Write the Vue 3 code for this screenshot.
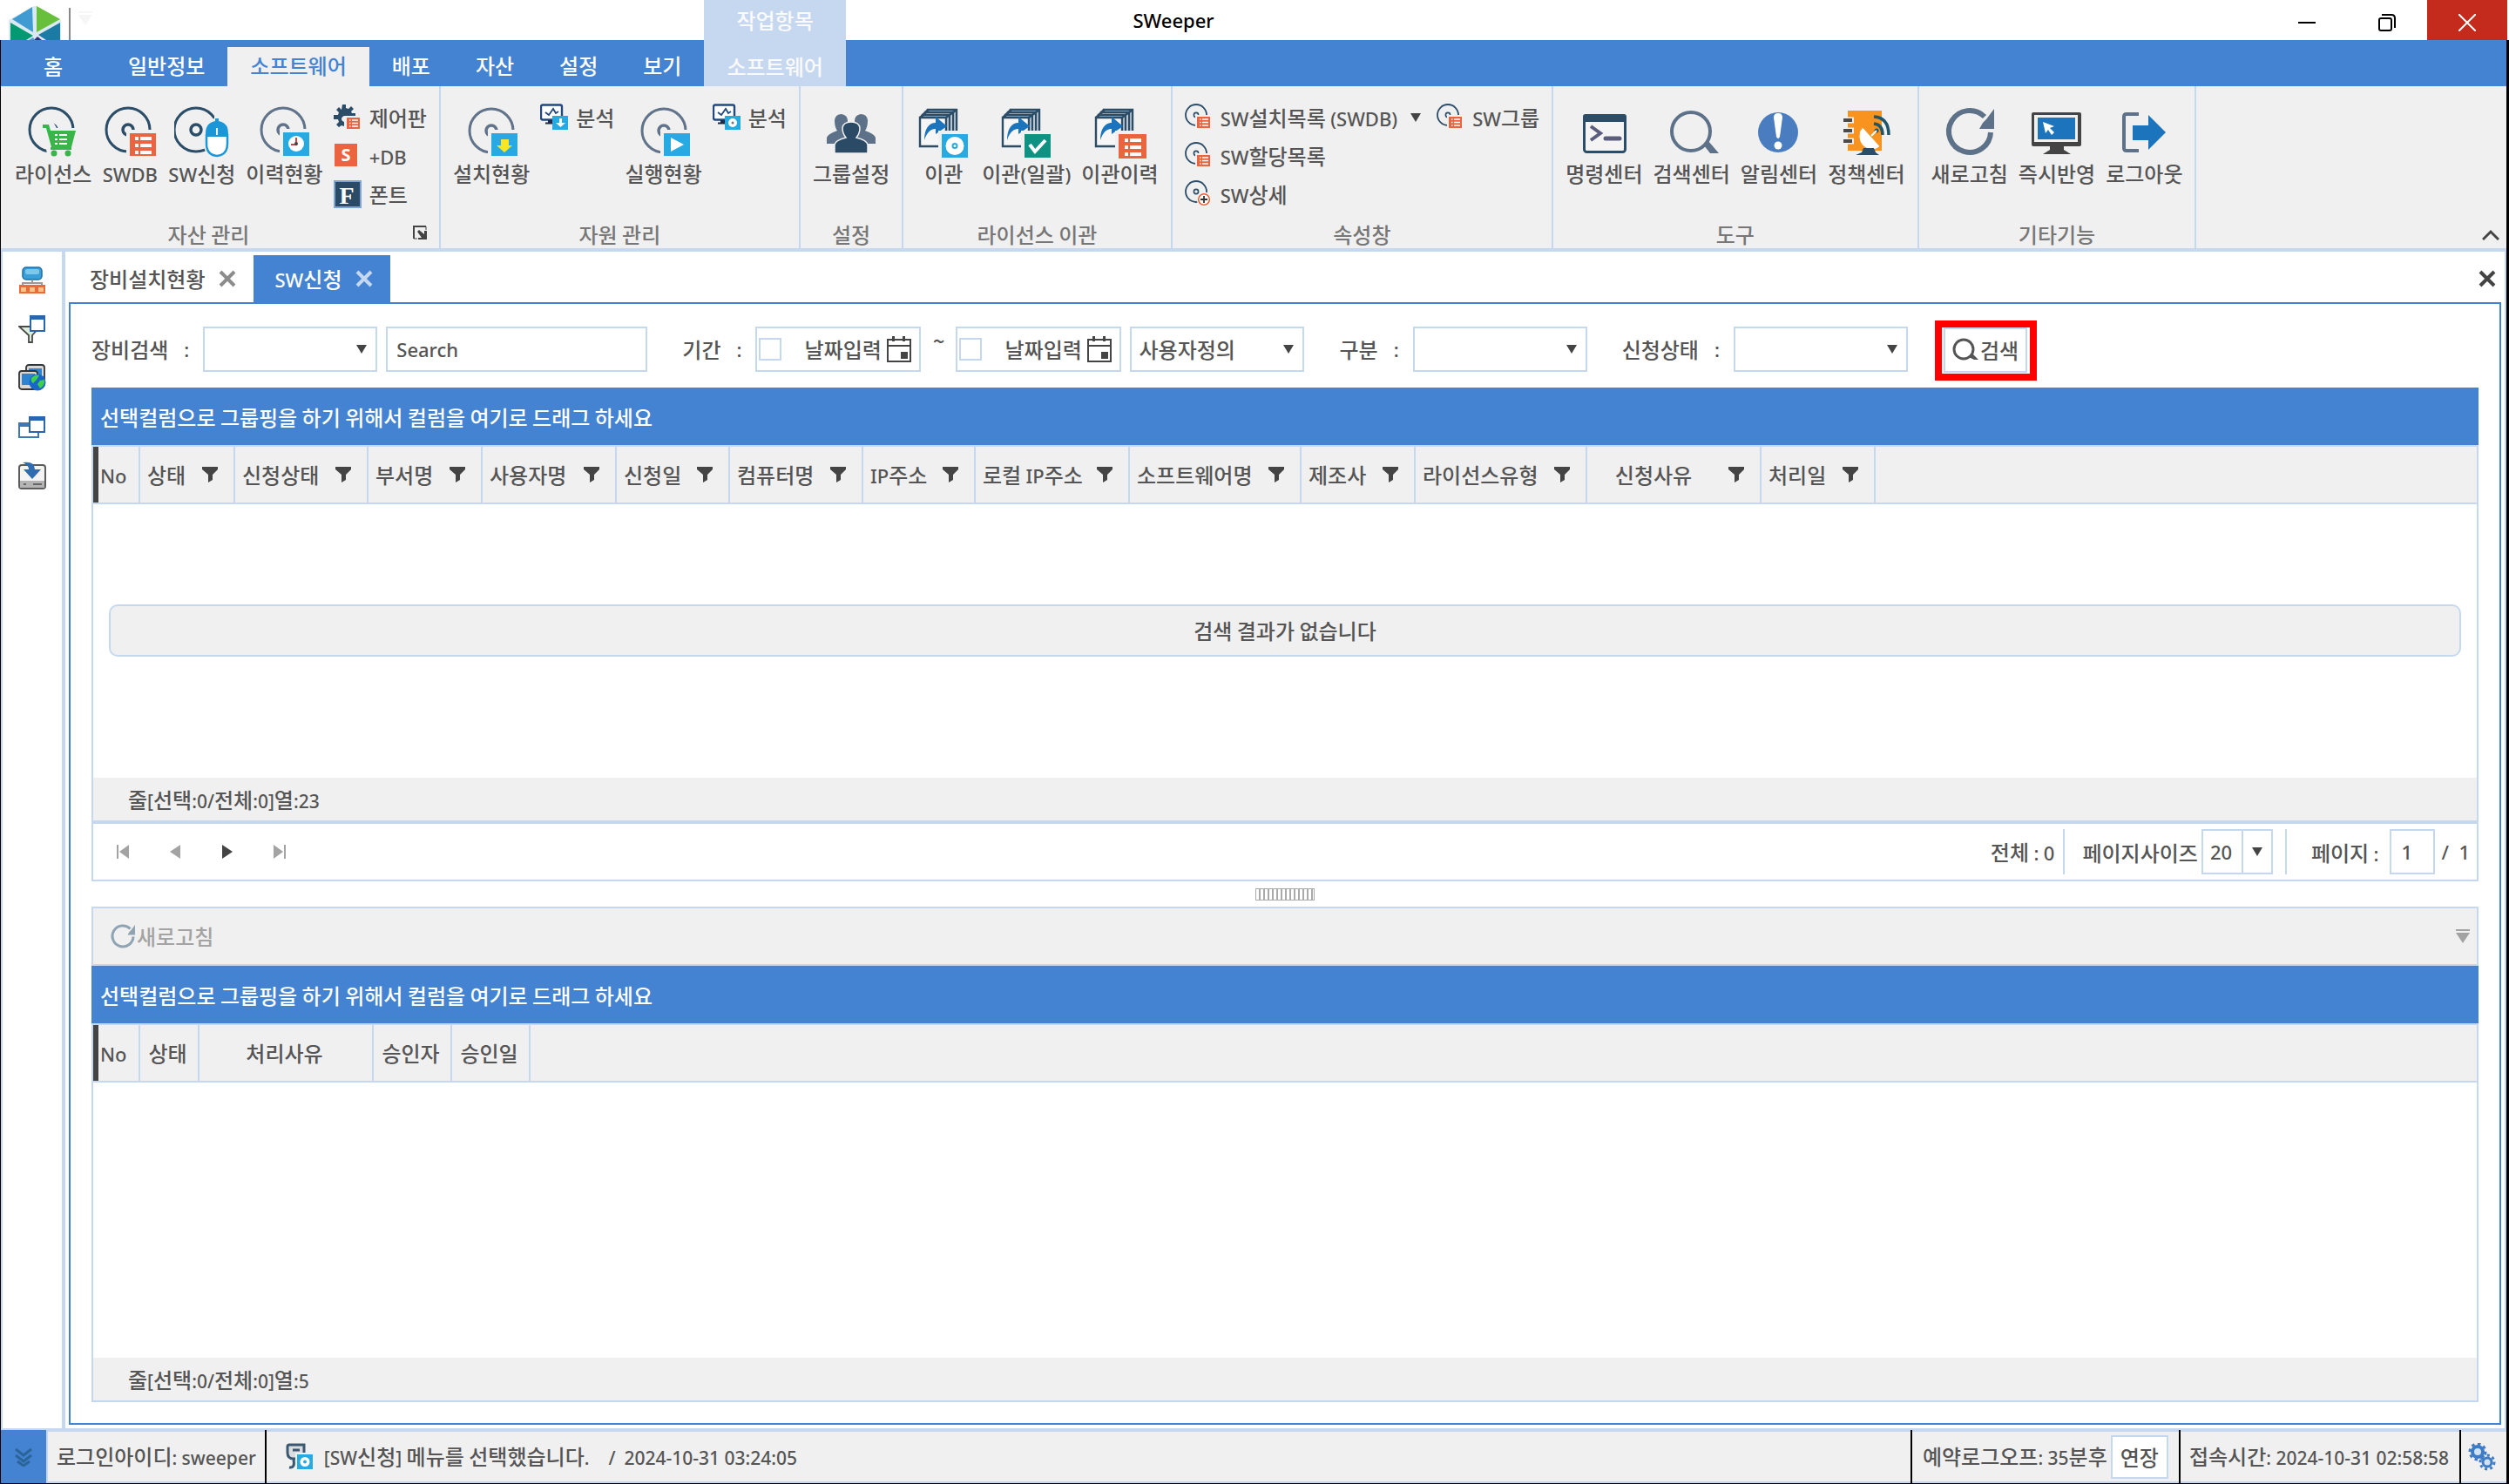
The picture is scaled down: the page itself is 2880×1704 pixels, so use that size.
<script setup>
import { h, ref } from 'vue'

const latinRun = /([A-Za-z0-9:()[\]/.+~-]+(?: [0-9][0-9:]+)*)/
const Mixed = (props) =>
  h('span', { class: 'mixed' }, props.text.split(latinRun).filter(Boolean).map((part) =>
    latinRun.test(part) ? h('span', { class: 'latin' }, part) : part))
Mixed.props = ['text']

const Icon = (props) =>
  h('svg', {
    viewBox: props.box || '0 0 64 64',
    width: props.w || 64,
    height: props.h || props.w || 64,
    'aria-hidden': 'true',
    class: 'icon',
    innerHTML: art[props.name]
  })
Icon.props = ['name', 'box', 'w', 'h']

const disc = (cx, cy, r, c = '#2c4d68', w = 3) =>
  `<circle cx="${cx}" cy="${cy}" r="${r}" fill="none" stroke="${c}" stroke-width="${w}"/><circle cx="${cx}" cy="${cy}" r="6" fill="none" stroke="${c}" stroke-width="${w + 0.5}"/>`
const badge = (x, y, w, hgt, c) =>
  `<path fill="#f0f0f0" d="M${x - 4} ${y - 4}h${w + 8}v${hgt + 8}h-${w + 8}z"/><path fill="${c}" d="M${x} ${y}h${w}v${hgt}h-${w}z"/>`
const lines = (x, y) =>
  [0, 8, 16].map((d) => `<path fill="#fff" d="M${x} ${y + d}h4v4h-4zM${x + 6} ${y + d}h13v4h-13z"/>`).join('')
const stack = `<g fill="none" stroke="#2c4d68" stroke-width="2.4"><path fill="#c9d2da" d="M14 7h33v34H14z"/><path fill="#dfe5ea" d="M11 10h32v34H11z"/><path fill="#c9d2da" d="M8 13h31v34H8z"/><path fill="#f6f6f6" d="M5 16h30v33H5z"/><path d="M5 16l9-9M35 16l12-9"/></g><path fill="#1c75bc" d="M10 42c0-13 5-20 13-20v-7l13 11-13 9v-6c-6 0-10 4-13 13z"/>`
const smallDisc = '<circle cx="13" cy="13" r="12" fill="none" stroke="#2c4d68" stroke-width="1.8"/><circle cx="13" cy="13" r="2.6" fill="none" stroke="#2c4d68" stroke-width="1.6"/>'
const smallList = '<path fill="#f0f0f0" d="M12 13h20v19H12z"/><path fill="#e9643f" d="M14 15h15v13H14z"/><path stroke="#fff" stroke-width="1.4" d="M17 18h1.500M20 18h7M17 21.500h1.500M20 21.500h7M17 25h1.500M20 25h7"/>'
const monitor = '<path fill="#fff" stroke="#24487c" stroke-width="2.400" d="M3 1.500h20q2 0 2 2v13q0 2-2 2H3q-2 0-2-2v-13q0-2 2-2z"/><path fill="none" stroke="#24487c" stroke-width="1.800" d="M6 10l4 3 5-7 3 5 3-2"/><path fill="#1c2c44" d="M9 19h7v3H9zM6 21.500h9v2H6z"/><path fill="#27aae1" d="M14 14h18v16H14z"/>'
const refresh = (c) => `<path fill="none" stroke="${c}" stroke-width="6" d="M56 33A24 24 0 1 1 49 15"/><path fill="${c}" d="M60 6v23H43l4-7 4-4z"/>`

const art = {
  license: disc(30, 30, 25) + '<path fill="#f0f0f0" d="M17 21h15l4 7h26v10l-4 26H26L20 28z"/><path fill="#3ab54a" d="M20 24h7l2 7h29l-5 19H30l-6-22h-4zM29 50h24v3H29z"/><circle cx="33" cy="57" r="3.500" fill="#3ab54a"/><circle cx="49" cy="57" r="3.500" fill="#3ab54a"/><path stroke="#fff" stroke-width="2" d="M34 36h3M39 36h9M34 41h3M39 41h9M34 46h3M39 46h9"/>',
  swdb: disc(30, 30, 25) + badge(32, 34, 30, 26, '#e9643f') + lines(38, 38),
  request: disc(25, 30, 25) + '<path fill="#f0f0f0" d="M46 12h7v5q12 5 12 18v12q-2 15-16 15-13-1-16-15V33q1-12 13-16z"/><path fill="#fff" stroke="#1b97d8" stroke-width="2.500" d="M37 36v10q0 13 12 14 12-1 12-14V36z"/><path fill="#1b97d8" d="M36 38v-4q0-12 11-14v-3h4v3q11 2 11 14v4z"/><path stroke="#f0f0f0" stroke-width="2" d="M49 28v8"/>',
  history: disc(31, 30, 25, '#61738a') + badge(31, 33, 30, 27, '#27aae1') + '<circle cx="46" cy="46" r="9" fill="#fff"/><path fill="none" stroke="#c44" stroke-width="2" d="M46 39v8h-6"/><circle cx="46" cy="46" r="2" fill="#444"/>',
  install: disc(32, 31, 25, '#61738a') + badge(32, 34, 30, 26, '#27aae1') + '<path fill="#fbe623" d="M43 41h9v7h4l-9 8-9-8h5z"/>',
  run: disc(32, 31, 25, '#61738a') + badge(32, 34, 30, 26, '#27aae1') + '<path fill="#fff" d="M40 39v16l15-8z"/>',
  group: '<path fill="#5d7188" d="M4 46v-7q1-4 12-8-3-4-3-12 1-7 8-7 7 1 7 8 0 7-3 11l8 3v12zM60 46v-7q-1-4-12-8 3-4 3-12-1-7-8-7-7 1-7 8 0 7 3 11l-8 3v12z"/><path fill="#2a4a66" stroke="#f0f0f0" stroke-width="1.500" d="M13 57V47q1-5 13-8-4-5-4-11 1-7 10-7t10 7q0 6-4 11 12 3 13 8v10z"/>',
  moveDisc: stack + badge(30, 35, 30, 27, '#27aae1') + '<circle cx="45" cy="48.500" r="10.500" fill="#fff"/><circle cx="45" cy="48.500" r="2.500" fill="none" stroke="#27aae1" stroke-width="2"/>',
  moveCheck: stack + badge(30, 35, 30, 27, '#109282') + '<path fill="none" stroke="#fff" stroke-width="4" d="M36 47l6 8 12-13"/>',
  moveList: stack + badge(31, 35, 32, 28, '#e9643f') + lines(38, 40),
  command: '<rect x="9.500" y="13.500" width="47" height="42" rx="3" fill="#f4f4f4" stroke="#2c4d68" stroke-width="3"/><path fill="#2c4d68" d="M8 15q0-3 3-3h44q3 0 3 3v6H8z"/><path fill="none" stroke="#5b5d7c" stroke-width="4" d="M17 26l11 8-11 8"/><path stroke="#5b5d7c" stroke-width="5" stroke-linecap="round" d="M34 40h16"/>',
  search: '<circle cx="31" cy="32" r="22" fill="none" stroke="#5d7188" stroke-width="4"/><path fill="#5d7188" d="M46 48l5-5 12 14h-10z"/>',
  alert: '<circle cx="31" cy="33" r="23" fill="#4a7dbf"/><path fill="#fff" d="M26 16q0-5 5-5t5 5l-3 22q-2 4-4 0z"/><circle cx="31" cy="48" r="4.500" fill="#fff"/>',
  policy: '<path fill="#f7931e" d="M11 8h39v46H11z"/><path stroke="#f0f0f0" stroke-width="7" d="M5 19h13M5 31h13M5 43h13"/><path stroke="#4a4a4a" stroke-width="4" d="M6 19h10M6 31h10M6 43h10"/><path fill="none" stroke="#20566b" stroke-width="3.500" d="M41 15q17 1 17 21M41 23q10 1 10 13"/><path fill="#fff" stroke="#f7931e" d="M28 27l20 22q-6 6-14 3-9-4-10-13-1-7 4-12z"/><circle cx="44" cy="31" r="2.500" fill="#20566b"/><path stroke="#fff" stroke-width="2" d="M38 37l6-6"/><path fill="#2c4d68" d="M29 51h12l2 5 4 3H20l7-3z"/>',
  refresh: refresh('#5d7188'),
  refreshPale: refresh('#8fa3b3'),
  apply: '<path fill="#444" d="M3 12q0-2 2-2h53q2 0 2 2v35q0 2-2 2H40v4l8 5H16l8-5v-4H5q-2 0-2-2z"/><path fill="#f0f0f0" d="M6 13h50v31H6z"/><path fill="#1c75bc" d="M10 16h43v25H10z"/><path fill="#fff" d="M16 21l13 5-5 2 5 5-3 3-4-6-3 4z"/>',
  logout: '<path fill="none" stroke="#5d7188" stroke-width="4" d="M26 12H12q-3 0-3 3v36q0 3 3 3h14"/><path fill="#1c75bc" d="M19 25h18V13l20 20-20 20V42H19z"/>',
  panel: '<path fill="#2c4d68" d="M10 1h4v4l3 1 3-3 3 3-3 3 1 2h4v5H15q0-2-3-2-3 1-3 4 0 2 3 3v5l-3-1-3 2-3-3 3-3-1-3H0v-5h5l1-3-3-3 3-3 3 3z"/><path fill="#f0f0f0" d="M13 14h18v17H13z"/><path fill="#e9643f" d="M15 16h15v13H15z"/><path stroke="#fff" stroke-width="1.500" d="M18 19h1.500M21 19h7M18 22.500h1.500M21 22.500h7M18 26h1.500M21 26h7"/>',
  sdb: '<path fill="#e9643f" d="M1 2h26v26H1z"/><text x="14" y="22" text-anchor="middle" font-family="Open Sans, sans-serif" font-size="20" font-weight="700" fill="#fff">S</text>',
  font: '<path fill="#7fa4d8" d="M0 0h32v32H0z"/><path fill="#2a4a66" d="M2 2h28v28H2z"/><text x="15" y="27" text-anchor="middle" font-family="Liberation Serif, serif" font-size="28" font-weight="700" fill="#fff">F</text>',
  discList: smallDisc + smallList,
  discPlus: smallDisc + '<circle cx="22" cy="22" r="8.500" fill="#f0f0f0"/><circle cx="22" cy="22" r="6.300" fill="#fff" stroke="#f15a29" stroke-width="1.500"/><path stroke="#333" stroke-width="1.800" d="M18 22h8M22 18v8"/>',
  analyseDown: monitor + '<path fill="#fff" d="M22 17h3v5h4l-5.500 5-5.500-5h4z"/>',
  analyseDisc: monitor + '<circle cx="23" cy="22" r="5" fill="#fff"/><circle cx="23" cy="22" r="1.500" fill="#777"/>',
  logo: '<path fill="#dbe9f3" d="M31 1h3l28 16v23H2V17z"/><path fill="#3f9bd1" d="M29 2l1 29L6 16z"/><path fill="#67bf3c" d="M34 1v30l27-15z"/><path fill="#039a72" d="M4 20l26 15-8 5H4z"/><path fill="#1b7ba5" d="M61 20L36 34l9 6h16z"/><path fill="#2b2f7c" d="M35 36l5 4h-9z"/><path fill="#4e9bd8" d="M30 37l2 3h-7z"/>',
  tree: '<rect x="5" y="1" width="22" height="14" rx="4" fill="#3a9fd6" stroke="#1d6fa8" stroke-width="1.500"/><rect x="8" y="3" width="16" height="6" rx="2" fill="#7cc7ea"/><path fill="none" stroke="#9a9a9a" stroke-width="2" d="M16 15v5M5 22v-3h22v3"/><path fill="#ea6a3a" d="M1 21h30v10H1z"/><path fill="#ffc08a" d="M3 24h6v5H3zM13 24h6v5h-6zM23 24h6v5h-6z"/>',
  filterWin: '<path fill="#dcefdc" stroke="#4a4a4a" stroke-width="1.800" d="M1 13h24l-9 10v8h-4v-8z"/><path fill="#fff" stroke="#2a66b0" stroke-width="2" d="M14 1h16v17H14z"/><path fill="#2a66b0" d="M13 0h18v5H13z"/>',
  globeWin: '<rect x="9" y="1" width="21" height="22" rx="3" fill="#d8d8d8" stroke="#333" stroke-width="1.800"/><path fill="#2d84d0" d="M12 5h15v14H12z"/><rect x="1" y="8" width="21" height="21" rx="3" fill="#d8d8d8" stroke="#333" stroke-width="1.800"/><path fill="#2d84d0" d="M4 11h15v13H4z"/><circle cx="22" cy="21" r="9.500" fill="#1866c8"/><path fill="#3fd04a" d="M15 16q5-5 9-3l-3 5-4 4q-3-2-2-6zM25 19l5-1q1 6-5 10l-3-5z"/>',
  windows: '<path fill="#fff" stroke="#3c78b8" stroke-width="2" d="M1 12h22v16H1z"/><path fill="#3c78b8" d="M1 11h14v5H1z"/><path fill="#fff" stroke="#2a66b0" stroke-width="2" d="M13 5h17v17H13z"/><path fill="#2a66b0" d="M12 4h19v5H12z"/>',
  download: '<rect x="1" y="4" width="30" height="27" rx="3" fill="#f4f4f4" stroke="#5c5c5c" stroke-width="2"/><path fill="#b4b4b4" d="M2 22h28v8H2z"/><path stroke="#666" stroke-width="2" d="M6 26h3M17 26h10"/><path fill="#2f6cb0" d="M5 1q14-2 14 8h7L16 20 6 9h6q0-5-7-8z"/>',
  message: '<path fill="#d9dde0" stroke="#3a5970" stroke-width="3" d="M4 2h17v16H9q-7 0-7-7V4q0-2 2-2z"/><path fill="none" stroke="#3a5970" stroke-width="3" d="M8 8h8M4 28q7 1 5-9"/><path fill="#f0f0f0" d="M11 11h21v20H11z"/><path fill="#27aae1" d="M13 13h18v17H13z"/><circle cx="22" cy="21.500" r="5.500" fill="#fff"/><circle cx="22" cy="21.500" r="2" fill="#27aae1"/>',
  gears: '<g fill="none" stroke="#3f7cc4"><circle cx="11" cy="10" r="6" stroke-width="4" fill="#cfe2f6"/><circle cx="11" cy="10" r="9" stroke-width="3" stroke-dasharray="3.500 3.500"/><circle cx="22" cy="22" r="5" stroke-width="3" fill="#cfe2f6"/><circle cx="22" cy="22" r="8" stroke-width="3" stroke-dasharray="3 3.200"/></g>',
  chevrons: '<path fill="none" stroke="#2a6599" stroke-width="3" d="M2 2l9 7 9-7M2 9l9 7 9-7M4 16l7 5 7-5"/>',
  funnel: '<path fill="#444" d="M0 0h18v3l-6 6v6l-5 3V9L0 3z"/>',
  caret: '<path fill="#444" d="M0 0h12L6 10z"/>',
  cross: '<path stroke="currentColor" stroke-width="4" d="M2 2l16 16M18 2L2 18"/>',
  calendar: '<path fill="none" stroke="#444" stroke-width="2" d="M1 4h26v25H1zM1 11h26"/><path fill="#444" d="M6 0h3v6H6zM18 0h3v6h-3zM16 18h8v8h-8z"/>',
  lens: '<circle cx="13" cy="13" r="11" fill="none" stroke="#555" stroke-width="3"/><path fill="#555" d="M19 22l4-4 7 7h-5z"/>',
  first: '<path fill="#a3a3a3" d="M0 0h2v16H0zM14 0v16L3 8z"/>',
  prev: '<path fill="#a3a3a3" d="M13 0v16L1 8z"/>',
  next: '<path fill="#444" d="M1 0v16l12-8z"/>',
  last: '<path fill="#a3a3a3" d="M14 0h-2v16h2zM0 0v16l11-8z"/>',
  overflow: '<path fill="currentColor" d="M0 0h16v2H0zM0 4h16l-8 12z"/>',
  launcher: '<path fill="none" stroke="#444" stroke-width="2" d="M1 15V1h14"/><path fill="none" stroke="#444" d="M1 15h4M15 1v4"/><path fill="#444" d="M5 7l2-2 6 5V6h3v10H6v-2h4z"/>',
  up: '<path fill="none" stroke="#444" stroke-width="3" d="M1 12l9-9 9 9"/>',
  minimise: '<path stroke="#000" stroke-width="2" d="M0 10h20"/>',
  restore: '<rect x="1" y="5" width="14" height="14" rx="2" fill="none" stroke="#000" stroke-width="2"/><path fill="none" stroke="#000" stroke-width="2" d="M4 1h11q4 0 4 4v11"/>',
  close: '<path stroke="#fff" stroke-width="2" d="M0 0l20 20M20 0L0 20"/>'
}

const tabs = ['일반정보', '소프트웨어', '배포', '자산', '설정', '보기']
const activeTab = ref('소프트웨어')

const groups = [
  { label: '자산 관리', launcher: true, items: [
    { big: '라이선스', icon: 'license' }, { big: 'SWDB', icon: 'swdb' },
    { big: 'SW신청', icon: 'request' }, { big: '이력현황', icon: 'history' },
    { small: [['제어판', 'panel'], ['+DB', 'sdb'], ['폰트', 'font']] }] },
  { label: '자원 관리', items: [
    { big: '설치현황', icon: 'install' }, { small: [['분석', 'analyseDown']] },
    { big: '실행현황', icon: 'run' }, { small: [['분석', 'analyseDisc']] }] },
  { label: '설정', items: [{ big: '그룹설정', icon: 'group' }] },
  { label: '라이선스 이관', items: [
    { big: '이관', icon: 'moveDisc' }, { big: '이관(일괄)', icon: 'moveCheck' }, { big: '이관이력', icon: 'moveList' }] },
  { label: '속성창', items: [
    { small: [['SW설치목록 (SWDB)', 'discList', true], ['SW할당목록', 'discList'], ['SW상세', 'discPlus']] },
    { small: [['SW그룹', 'discList']] }] },
  { label: '도구', items: [
    { big: '명령센터', icon: 'command' }, { big: '검색센터', icon: 'search' },
    { big: '알림센터', icon: 'alert' }, { big: '정책센터', icon: 'policy' }] },
  { label: '기타기능', items: [
    { big: '새로고침', icon: 'refresh' }, { big: '즉시반영', icon: 'apply' }, { big: '로그아웃', icon: 'logout' }] }
]

const side = [['tree', '조직'], ['filterWin', '필터'], ['globeWin', '원격'], ['windows', '창'], ['download', '저장']]

const requestColumns = [
  ['No', 54], ['상태', 109, true], ['신청상태', 153, true], ['부서명', 131, true], ['사용자명', 154, true],
  ['신청일', 130, true], ['컴퓨터명', 153, true], ['IP주소', 129, true], ['로컬 IP주소', 177, true],
  ['소프트웨어명', 197, true], ['제조사', 131, true], ['라이선스유형', 197, true], ['신청사유', 200, true], ['처리일', 131, true]
]
const approvalColumns = [['No', 54], ['상태', 68], ['처리사유', 200], ['승인자', 90], ['승인일', 90]]
const hint = '선택컬럼으로 그룹핑을 하기 위해서 컬럼을 여기로 드래그 하세요'
</script>

<template>
  <div class="window">
    <header class="titlebar">
      <Icon class="logo" name="logo" box="0 0 64 40" :w="64" :h="40" />
      <span class="rule"></span>
      <button class="quick" aria-label="빠른 실행"><Icon name="overflow" box="0 0 16 16" :w="16" /></button>
      <h1><Mixed text="SWeeper" /></h1>
      <button class="win" aria-label="최소화"><Icon name="minimise" box="0 0 20 20" :w="20" /></button>
      <button class="win" aria-label="복원"><Icon name="restore" box="0 0 20 20" :w="20" /></button>
      <button class="win shut" aria-label="닫기"><Icon name="close" box="0 0 20 20" :w="20" /></button>
    </header>

    <div class="frame">
      <nav class="strip">
        <button class="tab home">홈</button>
        <button v-for="t in tabs" :key="t" class="tab" :class="{ on: t === activeTab }" @click="activeTab = t">{{ t }}</button>
        <div class="context">
          <span class="context-title">작업항목</span>
          <button class="tab">소프트웨어</button>
        </div>
      </nav>

      <section class="ribbon">
        <div v-for="g in groups" :key="g.label" class="group">
          <div class="group-body">
            <template v-for="(it, i) in g.items" :key="i">
              <button v-if="it.big" class="big"><Icon :name="it.icon" /><Mixed :text="it.big" /></button>
              <div v-else class="smalls">
                <button v-for="s in it.small" :key="s[0]" class="small">
                  <Icon :name="s[1]" box="0 0 32 32" :w="32" /><Mixed :text="s[0]" />
                  <Icon v-if="s[2]" class="more" name="caret" box="0 0 12 10" :w="12" :h="10" />
                </button>
              </div>
            </template>
          </div>
          <div class="group-label" :class="{ offset: g.launcher }">
            <span>{{ g.label }}</span>
            <button v-if="g.launcher" class="launcher" aria-label="자세히"><Icon name="launcher" box="0 0 16 16" :w="16" /></button>
          </div>
        </div>
        <button class="collapse" aria-label="리본 접기"><Icon name="up" box="0 0 20 14" :w="20" :h="14" /></button>
      </section>

      <div class="work">
        <aside class="side">
          <button v-for="s in side" :key="s[0]" :aria-label="s[1]"><Icon :name="s[0]" box="0 0 32 32" :w="32" /></button>
        </aside>
        <main class="main">
          <div class="docs">
            <div class="doc"><span>장비설치현황</span><button aria-label="탭 닫기"><Icon name="cross" box="0 0 20 20" :w="20" /></button></div>
            <div class="doc on"><Mixed text="SW신청" /><button aria-label="탭 닫기"><Icon name="cross" box="0 0 20 20" :w="20" /></button></div>
            <button class="close-all" aria-label="모두 닫기"><Icon name="cross" box="0 0 20 20" :w="20" /></button>
          </div>

          <div class="page">
            <form class="filters" @submit.prevent>
              <label class="cap first" for="device"><span>장비검색</span><span>:</span></label>
              <span class="pick"><select id="device"><option></option></select><Icon name="caret" box="0 0 12 10" :w="12" :h="10" /></span>
              <input class="box keyword" type="text" placeholder="Search" aria-label="검색어">
              <label class="cap" for="from"><span>기간</span><span>:</span></label>
              <span class="box date"><input type="checkbox" aria-label="시작일 사용"><input id="from" type="text" value="날짜입력"><Icon name="calendar" box="0 0 28 30" :w="28" :h="30" /></span>
              <span class="tilde">~</span>
              <span class="box date"><input type="checkbox" aria-label="종료일 사용"><input type="text" value="날짜입력" aria-label="종료일"><Icon name="calendar" box="0 0 28 30" :w="28" :h="30" /></span>
              <span class="pick range"><select aria-label="기간 선택"><option>사용자정의</option></select><Icon name="caret" box="0 0 12 10" :w="12" :h="10" /></span>
              <label class="cap" for="kind"><span>구분</span><span>:</span></label>
              <span class="pick"><select id="kind"><option></option></select><Icon name="caret" box="0 0 12 10" :w="12" :h="10" /></span>
              <label class="cap" for="state"><span>신청상태</span><span>:</span></label>
              <span class="pick"><select id="state"><option></option></select><Icon name="caret" box="0 0 12 10" :w="12" :h="10" /></span>
              <span class="marked"><button class="go"><Icon name="lens" box="0 0 30 28" :w="30" :h="28" />검색</button></span>
            </form>

            <section class="grid">
              <div class="hint">{{ hint }}</div>
              <table>
                <colgroup><col v-for="c in requestColumns" :key="c[0]" :style="{ width: c[1] + 'px' }"><col></colgroup>
                <thead><tr>
                  <th v-for="c in requestColumns" :key="c[0]" :class="{ wide: c[0] === '신청사유' }">
                    <div class="th"><Mixed :text="c[0]" /><Icon v-if="c[2]" name="funnel" box="0 0 18 18" :w="18" /></div>
                  </th>
                  <th class="rest"></th>
                </tr></thead>
              </table>
              <div class="rows"><p class="none">검색 결과가 없습니다</p></div>
              <div class="sum"><Mixed text="줄[선택:0/전체:0]열:23" /></div>
              <div class="pager">
                <button aria-label="처음"><Icon name="first" box="0 0 14 16" :w="14" :h="16" /></button>
                <button aria-label="이전"><Icon name="prev" box="0 0 14 16" :w="14" :h="16" /></button>
                <button aria-label="다음"><Icon name="next" box="0 0 14 16" :w="14" :h="16" /></button>
                <button aria-label="마지막"><Icon name="last" box="0 0 14 16" :w="14" :h="16" /></button>
                <span class="total"><Mixed text="전체 : 0" /></span>
                <label class="size" for="size">페이지사이즈</label>
                <span class="pick mini"><select id="size"><option>20</option></select><Icon name="caret" box="0 0 12 10" :w="12" :h="10" /></span>
                <label class="no" for="pageno"><Mixed text="페이지 :" /></label>
                <input id="pageno" class="box num" type="text" value="1">
                <span class="of latin">/&nbsp; 1</span>
              </div>
            </section>

            <div class="splitter"><span class="grip"></span></div>

            <section class="grid lower">
              <div class="tools">
                <button disabled><Icon name="refreshPale" :w="32" />새로고침</button>
                <Icon name="overflow" box="0 0 16 16" :w="16" />
              </div>
              <div class="hint">{{ hint }}</div>
              <table class="plain">
                <colgroup><col v-for="c in approvalColumns" :key="c[0]" :style="{ width: c[1] + 'px' }"><col></colgroup>
                <thead><tr>
                  <th v-for="c in approvalColumns" :key="c[0]"><div class="th"><Mixed :text="c[0]" /></div></th>
                  <th class="rest"></th>
                </tr></thead>
              </table>
              <div class="rows"></div>
              <div class="sum"><Mixed text="줄[선택:0/전체:0]열:5" /></div>
            </section>
          </div>
        </main>
      </div>

      <footer class="status">
        <button class="expand" aria-label="펼치기"><Icon name="chevrons" box="0 0 22 22" :w="22" /></button>
        <div class="cell login"><Mixed text="로그인아이디: sweeper" /></div>
        <div class="cell note"><Icon name="message" box="0 0 32 32" :w="32" /><Mixed text="[SW신청] 메뉴를 선택했습니다." /><span class="when"><Mixed text="/" /><Mixed text="2024-10-31 03:24:05" /></span></div>
        <div class="cell off"><Mixed text="예약로그오프: 35분후" /><button class="extend">연장</button></div>
        <div class="cell online"><Mixed text="접속시간: 2024-10-31 02:58:58" /></div>
        <div class="cell gear"><Icon name="gears" box="0 0 32 32" :w="32" /></div>
      </footer>
    </div>
  </div>
</template>

<style>
body { background: #fff; }
.mixed { white-space: pre; }
.latin { font-family: "Noto Sans", "Open Sans", sans-serif; font-size: 22px; }
.icon { display: block; flex: none; }
</style>

<style scoped>
.window {
  --blue: #4483d2;
  --pale: #c6d8f0;
  --grey: #f0f0f0;
  --latin: "Noto Sans", "Open Sans", sans-serif;
  display: flex;
  flex-direction: column;
  min-height: 100vh;
  font-family: "Noto Sans CJK KR", sans-serif;
  font-size: 24px;
  font-weight: 500;
  line-height: 32px;
  color: #555;
  background: #fff;
}
.window *, .window *::before { box-sizing: border-box; }
button, input, select { font: inherit; color: inherit; margin: 0; padding: 0; border: 0; background: none; border-radius: 0; outline: 0; }
button { white-space: nowrap; }

.titlebar { display: flex; height: 46px; }
.logo { align-self: flex-end; margin-left: 8px; }
.rule { width: 2px; margin: 9px 9px 0 7px; background: #888; }
.quick { width: 18px; padding-top: 13px; color: #f6f6f6; display: flex; }
h1 { flex: 1; margin: 0 16px 0 0; text-align: center; font-size: 24px; font-weight: 500; line-height: 44px; color: #000; }
.win { width: 92px; display: flex; align-items: center; justify-content: center; padding-top: 6px; }
.shut { background: #c42b1c; margin-right: 2px; }

.frame { flex: 1; display: flex; flex-direction: column; border: solid #000; border-width: 0 3px 1px 1px; }
.strip { display: flex; align-items: flex-end; height: 53px; background: var(--blue); }
.tab { height: 45px; padding: 0 26px 4px; color: #fff; }
.tab.home { width: 120px; padding-bottom: 2px; }
.tab.on { background: var(--grey); color: var(--blue); }
.context { display: flex; flex-direction: column; height: 99px; background: var(--pale); color: #fafafa; text-align: center; }
.context-title { flex: 1; line-height: 46px; }
.context .tab { color: #fafafa; padding-bottom: 2px; }

.ribbon { display: flex; height: 190px; background: var(--grey); border-bottom: 4px solid var(--pale); }
.group { display: flex; flex-direction: column; border-right: 2px solid var(--pale); }
.group-body { flex: 1; display: flex; padding: 14px 8px 0; }
.group:first-child .group-body { padding-left: 10px; }
.big { display: flex; flex-direction: column; align-items: center; min-width: 76px; height: 102px; padding: 6px 6px 0; }
.smalls { display: flex; flex-direction: column; align-items: flex-start; }
.small { display: flex; align-items: center; gap: 9px; height: 44px; padding: 0 6px; }
.more { margin: 0 6px; }
.group-label { position: relative; height: 32px; text-align: center; color: #777; }
.group-label.offset { padding-right: 26px; }
.launcher { position: absolute; right: 14px; top: 6px; }
.collapse { margin: auto 8px 8px auto; }

.work { flex: 1; display: flex; border: solid var(--pale); border-width: 0 2px 2px; }
.side { display: flex; flex-direction: column; align-items: center; width: 72px; padding-top: 5px; border-right: 4px solid var(--pale); }
.side button { height: 56px; }
.main { flex: 1; display: flex; flex-direction: column; padding: 4px; min-width: 0; }
.docs { display: flex; height: 54px; }
.doc { display: flex; align-items: center; gap: 16px; padding: 0 20px 0 24px; }
.doc button { color: #8c8c8c; }
.doc.on { background: var(--blue); color: #fff; }
.doc.on button { color: var(--pale); }
.close-all { margin-left: auto; padding-right: 6px; color: #444; }

.page { flex: 1; display: flex; flex-direction: column; padding: 26px 24px 24px; border: 2px solid var(--blue); }
.filters { display: flex; align-items: center; height: 52px; margin-bottom: 18px; }
.cap { display: flex; gap: 18px; padding: 0 16px 0 40px; }
.cap.first { padding-left: 0; }
.cap span:last-child { font-family: var(--latin); font-size: 22px; }
.box, .pick select { height: 52px; border: 2px solid var(--pale); background: #fff; }
.pick { display: grid; align-items: center; width: 200px; }
.pick > * { grid-area: 1 / 1; }
.pick select { width: 100%; padding-left: 8px; appearance: none; }
.pick .icon { justify-self: end; margin-right: 12px; pointer-events: none; }
.keyword { width: 300px; margin-left: 10px; padding: 0 10px; font-family: var(--latin); font-size: 22px; }
.keyword::placeholder { color: #555; opacity: 1; }
.date { display: flex; align-items: center; width: 190px; padding: 0 9px 0 2px; }
.date input[type="checkbox"] { appearance: none; flex: none; width: 26px; height: 26px; border: 2px solid var(--pale); }
.date input[type="text"] { flex: 1; min-width: 0; padding-left: 26px; }
.tilde { width: 40px; height: 52px; text-align: center; }
.range { margin-left: 10px; }
.marked { display: flex; flex: none; margin: 2px 0 0 31px; border: 8px solid #f00; padding: 0 3px 1px 2px; }
.go { display: flex; align-items: center; gap: 2px; height: 52px; padding: 0 8px; border: 2px solid var(--pale); background: #fff; }

.grid { flex: 1; display: flex; flex-direction: column; border: solid var(--pale); border-width: 0 2px 2px; }
.hint { height: 66px; margin: 0 -2px; padding: 0 10px; background: var(--blue); color: #fff; line-height: 68px; }
table { width: 100%; table-layout: fixed; border-collapse: separate; border-spacing: 0; background: var(--grey); border: solid var(--pale); border-width: 2px 0; }
th { height: 64px; padding: 0; font-weight: 500; border-right: 2px solid var(--pale); text-align: left; white-space: nowrap; }
th:first-child { border-left: 6px solid #444; }
th.rest { border-right: 0; }
.th { display: flex; align-items: center; justify-content: space-between; padding: 0 18px 0 8px; }
.wide .th > :first-child { flex: 1; padding-right: 18px; text-align: center; }
.plain .th { justify-content: center; padding: 0 3px 0 0; }
th:first-child .th { justify-content: flex-start; padding: 0 0 0 2px; }
.rows { flex: 1; display: flex; align-items: center; padding: 0 18px; }
.none { flex: 1; margin: 0 0 24px; padding: 12px 0; text-align: center; background: var(--grey); border: 2px solid var(--pale); border-radius: 10px; }
.sum { height: 49px; padding-left: 40px; line-height: 50px; background: var(--grey); }
.sum :deep(.latin) { font-size: 21px; }
.pager { display: flex; align-items: center; height: 68px; border-top: 4px solid var(--pale); padding: 0 8px 0 10px; }
.pager button { display: flex; justify-content: center; width: 60px; }
.pager button:first-child { margin-left: -6px; }
.total { margin-left: auto; padding-right: 10px; }
.size, .no { height: 52px; line-height: 54px; border-left: 2px solid var(--pale); padding-left: 20px; }
.size { padding-right: 4px; }
.no { margin-left: 14px; padding: 0 12px 0 28px; }
.pick.mini { width: 82px; background: linear-gradient(var(--pale), var(--pale)) 46px 0 / 2px 100% no-repeat; }
.mini select { background: none; font-family: var(--latin); font-size: 22px; }
.num { width: 52px; padding-left: 12px; font-family: var(--latin); font-size: 22px; }
.of { padding-left: 8px; }
.splitter { display: flex; align-items: center; justify-content: center; height: 29px; }
.grip { width: 68px; height: 14px; border: 1px solid #aaa; background: repeating-linear-gradient(90deg, #fff 0 3px, #aaa 3px 5px); }
.lower { border-top-width: 2px; }
.tools { display: flex; align-items: center; justify-content: space-between; height: 66px; padding: 0 8px 0 18px; background: var(--grey); color: #a3a3a3; border-bottom: 2px solid var(--pale); }
.tools button { display: flex; align-items: center; }

.status { display: flex; height: 61px; background: var(--grey); }
.status :deep(.latin) { font-size: 21px; }
.expand { display: flex; align-items: center; justify-content: center; width: 52px; background: var(--blue); }
.cell { display: flex; align-items: center; border: solid var(--pale); border-width: 2px 0; padding: 0 12px; }
.cell.login { border-left-width: 2px; padding: 0 10px; }
.cell + .cell { position: relative; }
.cell + .cell::before { content: ""; position: absolute; left: 0; top: -2px; bottom: -2px; width: 2px; background: #000; }
.cell.note { flex: 1; gap: 12px; padding-left: 24px; }
.when { display: flex; gap: 10px; padding-left: 10px; }
.cell.off { gap: 4px; padding-left: 14px; }
.extend { height: 50px; padding: 0 9px; border: 2px solid var(--pale); background: #fff; }
.cell.gear { padding: 0 12px 0 10px; }
</style>
